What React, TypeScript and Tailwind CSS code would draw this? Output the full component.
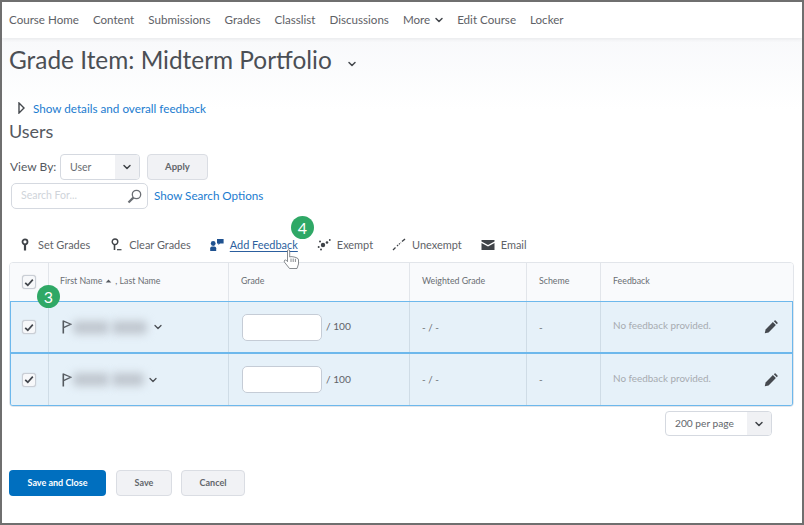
import { ChevronDown } from "lucide-react";

const font = { fontFamily: "Lato, 'Open Sans', sans-serif" };

const navItems = ["Course Home", "Content", "Submissions", "Grades", "Classlist", "Discussions"];

function Check() {
  return (
    <div className="w-[14px] h-[14px] rounded-[3px] border border-[#c9ced6] bg-[#f7f8fa] flex items-center justify-center shadow-[0_0_1px_#bbb]">
      <svg width="10" height="9" viewBox="0 0 10 9" fill="none">
        <path d="M1.2 4.8 L3.8 7.2 L8.8 1.6" stroke="#43474d" strokeWidth="1.7" />
      </svg>
    </div>
  );
}

function Badge({ n, className }: { n: string; className: string }) {
  return (
    <div className={`absolute w-[23px] h-[23px] rounded-full bg-[#2fa866] text-white text-[16px] flex items-center justify-center ${className}`}>
      {n}
    </div>
  );
}

function Flag() {
  return (
    <svg width="10" height="14" viewBox="0 0 10 14" fill="none">
      <path d="M1.3 0.5 V13.5" stroke="#555a60" strokeWidth="1.6" />
      <path d="M1.5 1.2 L9 4.2 L1.5 7.6" stroke="#555a60" strokeWidth="1.3" />
    </svg>
  );
}

function Pencil() {
  return (
    <svg width="14" height="14" viewBox="0 0 14 14" fill="#45494f">
      <path d="M0.8 13.2 L1.6 9.4 L8.9 2.1 L11.9 5.1 L4.6 12.4 Z" />
      <path d="M9.8 1.2 L10.6 0.5 Q11.1 0.1 11.6 0.5 L13.5 2.4 Q13.9 2.9 13.5 3.4 L12.8 4.2 Z" />
    </svg>
  );
}

function Action({ icon, label, linked }: { icon: React.ReactNode; label: string; linked?: boolean }) {
  return (
    <div className="flex items-center gap-[6px]">
      <div className="w-[14px] h-[14px] flex items-center justify-center">{icon}</div>
      <span className={linked ? "text-[#2c5f9e] underline underline-offset-2" : "text-[#5f6368]"}>{label}</span>
    </div>
  );
}

function Row({ a, b, chevronGap, last }: { a: number; b: number; chevronGap: string; last?: boolean }) {
  return (
    <div className={`flex bg-[#e6f1f9] text-[9.9px] ${last ? "h-[51px]" : "h-[52px] border-b-2 border-[#6db8ec]"}`}>
      <div className="w-[38px] flex items-center justify-center pr-[1px] border-r border-[#cfdce6]">
        <Check />
      </div>
      <div className="w-[180px] flex items-center pl-[13px] border-r border-[#cfdce6]">
        <Flag />
        <div className="flex ml-[1px] gap-[3px]">
          <div className="h-[13px] rounded-sm bg-[#bfc6ce] blur-[4px]" style={{ width: a }} />
          <div className="h-[13px] rounded-sm bg-[#bfc6ce] blur-[4px]" style={{ width: b }} />
        </div>
        <ChevronDown className={`w-[12px] h-[12px] text-[#4a4e54] ${chevronGap}`} strokeWidth={2.6} />
      </div>
      <div className="w-[181px] flex items-center pl-[13px] gap-[4px] border-r border-[#cfdce6] text-[#5f6368]">
        <div className="w-[80px] h-[27px] bg-white rounded-[5px] border border-[#c5ccd6]" />
        <span className="text-[10.2px]">/ 100</span>
      </div>
      <div className="w-[117px] flex items-center pl-[12px] border-r border-[#cfdce6] text-[#6a6e73]">- / -</div>
      <div className="w-[74px] flex items-center pl-[12px] border-r border-[#cfdce6] text-[#6a6e73]">-</div>
      <div className="flex-1 flex items-center justify-between pl-[12px] pr-[14px] text-[#a7abb0]">
        <span className="-mt-[3px]">No feedback provided.</span>
        <Pencil />
      </div>
    </div>
  );
}

export default function App() {
  return (
    <div className="w-[804px] h-[525px] border-2 border-[#6f6f6f] bg-white relative overflow-hidden text-[#55595f]" style={font}>
      <nav className="h-[36px] flex items-center pl-[7px] gap-[14px] text-[11.6px] text-[#5e6166] bg-white shadow-[0_1px_4px_rgba(0,0,0,0.08)] relative">
        {navItems.map((n) => (
          <span key={n}>{n}</span>
        ))}
        <span className="flex items-center gap-[3px]">
          More <ChevronDown className="w-[12px] h-[12px] text-[#44484d]" strokeWidth={3} />
        </span>
        <span className="-ml-[2px]">Edit Course</span>
        <span>Locker</span>
      </nav>

      <div className="bg-gradient-to-b from-[#f8f9fb] to-white h-[72px] pl-[7px]">
        <div className="flex items-center h-[42px] pt-[2px]">
          <h1 className="text-[24.4px] leading-[32px] text-[#4b4f55]">Grade Item: Midterm Portfolio</h1>
          <ChevronDown className="w-[12px] h-[12px] ml-[14px] mt-[8px] text-[#44484d]" strokeWidth={3} />
        </div>
        <div className="flex items-center mt-[20px] text-[11.7px] text-[#1b7ccf] pl-[9px] leading-[16px]">
          <svg width="7" height="12" viewBox="0 0 7 12" fill="none">
            <path d="M1 1 L6 6 L1 11 Z" stroke="#44484d" strokeWidth="1.4" />
          </svg>
          <span className="ml-[8px]">Show details and overall feedback</span>
        </div>
      </div>

      <div className="pl-[7px] pr-[9px]">
        <div className="text-[18px] leading-[24px] mt-[9px] text-[#55595f]">Users</div>

        <div className="flex items-center mt-[11px] h-[26px] text-[12px] pl-[1px]">
          <span className="text-[#55595f] text-[12px] w-[50px]">View By:</span>
          <div className="flex w-[80px] h-[26px] rounded-[4px] border border-[#d5d9e0] bg-white overflow-hidden">
            <span className="flex-1 pl-[9px] text-[10.5px] leading-[24px] text-[#6a6e73]">User</span>
            <div className="w-[24px] bg-[#f0f1f4] flex items-center justify-center">
              <ChevronDown className="w-[12px] h-[12px] text-[#3f4348]" strokeWidth={3} />
            </div>
          </div>
          <div className="ml-[7px] w-[61px] h-[26px] rounded-[4px] border border-[#dadde3] bg-[#f1f2f5] flex items-center justify-center text-[9.5px] font-bold text-[#62666b]">
            Apply
          </div>
        </div>

        <div className="flex items-center mt-[3px] h-[26px] pl-[2px]">
          <div className="w-[137px] h-[26px] rounded-[5px] border border-[#d5d9e0] bg-white flex items-center justify-between pl-[9px] pr-[5px] text-[10.5px] text-[#cfd4da]">
            <span>Search For...</span>
            <svg width="15" height="15" viewBox="0 0 15 15" fill="none">
              <circle cx="9.5" cy="5.5" r="4.2" stroke="#6a6e73" strokeWidth="1.3" />
              <path d="M6.4 8.6 L1.5 13.5" stroke="#6a6e73" strokeWidth="2.2" />
            </svg>
          </div>
          <span className="ml-[6px] text-[11.65px] text-[#1b7ccf]">Show Search Options</span>
        </div>

        <div className="flex items-center mt-[26px] h-[20px] pl-[9px] gap-[19px] text-[10.95px]">
          <Action
            icon={
              <svg width="8" height="13" viewBox="0 0 8 13" fill="none">
                <circle cx="4" cy="3.8" r="2.5" stroke="#3f4348" strokeWidth="1.8" />
                <path d="M4 6 V12.5" stroke="#3f4348" strokeWidth="2.2" />
              </svg>
            }
            label="Set Grades"
          />
          <Action
            icon={
              <svg width="11" height="13" viewBox="0 0 11 13" fill="none">
                <circle cx="4" cy="3.8" r="2.8" stroke="#3f4348" strokeWidth="1.4" />
                <path d="M3.5 6.5 V12" stroke="#3f4348" strokeWidth="1.6" />
                <path d="M6 11.7 H10.5" stroke="#3f4348" strokeWidth="1.2" />
              </svg>
            }
            label="Clear Grades"
          />
          <Action
            icon={
              <svg width="14" height="13" viewBox="0 0 14 13" fill="#1f5290">
                <circle cx="3.2" cy="5.5" r="2.4" />
                <path d="M0.2 13 V10.2 Q0.2 8.4 2 8.4 H4.4 Q6.2 8.4 6.2 10.2 V13 Z" />
                <path d="M7 1 H13.6 V5.5 H10 L8.4 7 V5.5 H7 Z" />
              </svg>
            }
            label="Add Feedback"
            linked
          />
          <Action
            icon={
              <svg width="14" height="13" viewBox="0 0 14 13" fill="#3f4348">
                <circle cx="6" cy="7" r="2.2" />
                <circle cx="1.7" cy="9" r="1" />
                <circle cx="3" cy="3.5" r="1" />
                <circle cx="4" cy="11.5" r="1" />
                <circle cx="10" cy="4.5" r="1.3" />
                <circle cx="12.8" cy="2" r="0.9" />
              </svg>
            }
            label="Exempt"
          />
          <Action
            icon={
              <svg width="14" height="13" viewBox="0 0 14 13" fill="none" stroke="#3f4348">
                <path d="M1 12 L3.5 9.5" strokeWidth="1.2" />
                <path d="M5 8 L9 4.5" strokeWidth="1.2" strokeDasharray="1.5 1" />
                <path d="M10 3.5 L13 1" strokeWidth="1.4" />
              </svg>
            }
            label="Unexempt"
          />
          <Action
            icon={
              <svg width="14" height="10" viewBox="0 0 14 10" fill="#3f4348">
                <path d="M0.5 0 H13.5 V1.5 L7 5 L0.5 1.5 Z" />
                <path d="M0.5 3 L7 6.6 L13.5 3 V10 H0.5 Z" />
              </svg>
            }
            label="Email"
          />
        </div>

        <div className="mt-[7px] rounded-[4px] border border-[#e2e5ea] overflow-hidden relative w-[785px]">
          <div className="flex h-[38px] bg-[#f9fafc] text-[8.8px] text-[#6a6e73]">
            <div className="w-[39px] flex items-center justify-center border-r border-[#e2e5ea]">
              <Check />
            </div>
            <div className="w-[180px] flex items-center pl-[11px] pb-[3px] border-r border-[#e2e5ea] gap-[2px]">
              <span>First Name</span>
              <svg width="7" height="4" viewBox="0 0 8 5" fill="#55595f" className="mx-[1px]">
                <path d="M0.5 4.5 L4 0.5 L7.5 4.5 Z" />
              </svg>
              <span>, Last Name</span>
            </div>
            <div className="w-[181px] flex items-center pl-[12px] pb-[3px] border-r border-[#e2e5ea]">Grade</div>
            <div className="w-[117px] flex items-center pl-[12px] pb-[3px] border-r border-[#e2e5ea]">Weighted Grade</div>
            <div className="w-[74px] flex items-center pl-[12px] pb-[3px] border-r border-[#e2e5ea]">Scheme</div>
            <div className="flex-1 flex items-center pl-[12px] pb-[3px]">Feedback</div>
          </div>
          <div className="border-2 border-[#6db8ec] border-t-[1.5px] rounded-b-[4px] -mx-[1px] -mb-[1px] overflow-hidden">
            <Row a={36} b={35} chevronGap="ml-[5px]" />
            <Row a={36} b={32} chevronGap="ml-[3px]" last />
          </div>
        </div>

        <div className="flex justify-end pr-[21px] mt-[4px]">
          <div className="flex w-[107px] h-[25px] rounded-[4px] border border-[#d5d9e0] bg-white overflow-hidden text-[10.2px] text-[#62666b]">
            <span className="flex-1 pl-[9px] leading-[23px]">200 per page</span>
            <div className="w-[24px] bg-[#f0f1f4] flex items-center justify-center">
              <ChevronDown className="w-[12px] h-[12px] text-[#3f4348]" strokeWidth={3} />
            </div>
          </div>
        </div>

        <div className="flex mt-[34px] text-[9px] font-bold">
          <div className="w-[97px] h-[26px] rounded-[4px] bg-[#006fbf] text-white flex items-center justify-center">Save and Close</div>
          <div className="ml-[10px] w-[56px] h-[26px] rounded-[4px] bg-[#f1f2f5] border border-[#dadde3] text-[#62666b] flex items-center justify-center">Save</div>
          <div className="ml-[9px] w-[64px] h-[26px] rounded-[4px] bg-[#f1f2f5] border border-[#dadde3] text-[#62666b] flex items-center justify-center">Cancel</div>
        </div>
      </div>

      <Badge n="3" className="left-[35px] top-[283px]" />
      <Badge n="4" className="left-[289px] top-[214px]" />
      <svg className="absolute left-[281px] top-[247px]" width="17" height="21" viewBox="0 0 17 21" fill="#fff" stroke="#6a6e73" strokeWidth="0.8">
        <path d="M4.5 2 Q4.5 0.7 5.6 0.7 Q6.7 0.7 6.7 2 V8 L8 7.6 L10 7.8 L12 8.2 L14 9 Q15.5 9.6 15.5 11 V15 L14 19.5 H6.5 L1.5 13.2 Q0.7 12 1.7 11.2 Q2.7 10.6 3.6 11.6 L4.5 12.6 Z" />
        <path d="M8 9.5 V13 M10.2 9.5 V13 M12.4 9.8 V13" />
      </svg>
    </div>
  );
}
